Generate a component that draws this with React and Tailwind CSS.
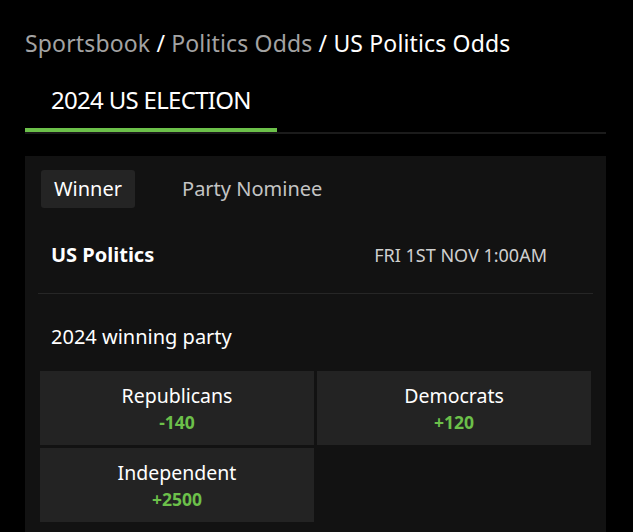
import React from "react";

const outcomes = [
  { name: "Republicans", odds: "-140" },
  { name: "Democrats", odds: "+120" },
  { name: "Independent", odds: "+2500" },
];

export default function App() {
  return (
    <div
      className="min-h-screen bg-black pl-[25px] pr-[27px] pt-[27px] text-white"
      style={{ fontFamily: '"Noto Sans", "Open Sans", sans-serif' }}
    >
      {/* Breadcrumb */}
      <div className="text-[23px] leading-[32px] tracking-[0.15px]">
        <span className="text-[#a3a3a3]">Sportsbook</span>
        <span className="text-white"> / </span>
        <span className="text-[#a3a3a3]">Politics Odds</span>
        <span className="text-white"> / US Politics Odds</span>
      </div>

      {/* Event tabs */}
      <div className="mt-[25px] border-b-2 border-[#1b1b1b]">
        <div className="w-[252px] border-b-[4px] border-[#6cc04a] pb-[12px] pl-[26px] text-[24px] leading-[32px] tracking-[-0.7px]">
          2024 US ELECTION
        </div>
      </div>

      {/* Market card */}
      <div className="mt-[22px] bg-[#121212] px-[13px] pb-[10px] pt-[14px]">
        <div className="flex items-center px-[3px]">
          <div className="rounded-[3px] bg-[#242424] px-[13px] text-[20px] leading-[38px]">
            Winner
          </div>
          <div className="ml-[47px] text-[20px] leading-[38px] text-[#c4c4c4]">
            Party Nominee
          </div>
        </div>

        <div className="h-[86px] border-b border-[#262626] pl-[13px] pr-[46px] pt-[33px]">
          <div className="flex items-center justify-between leading-[28px]">
            <span className="text-[20px] font-bold">US Politics</span>
            <span className="text-[18px] text-[#cfcfcf]">FRI 1ST NOV 1:00AM</span>
          </div>
        </div>

        <div className="pl-[13px] pt-[29px] text-[20px] leading-[28px]">
          2024 winning party
        </div>

        <div className="mt-[20px] grid grid-cols-2 gap-[3px] px-[2px]">
          {outcomes.map((o) => (
            <div
              key={o.name}
              className="flex h-[74px] flex-col items-center bg-[#232323] pt-[11px]"
            >
              <span className="text-[19.5px] leading-[27px]">{o.name}</span>
              <span className="text-[17.5px] font-bold leading-[27px] text-[#6cc04a]">
                {o.odds}
              </span>
            </div>
          ))}
        </div>
      </div>
    </div>
  );
}
